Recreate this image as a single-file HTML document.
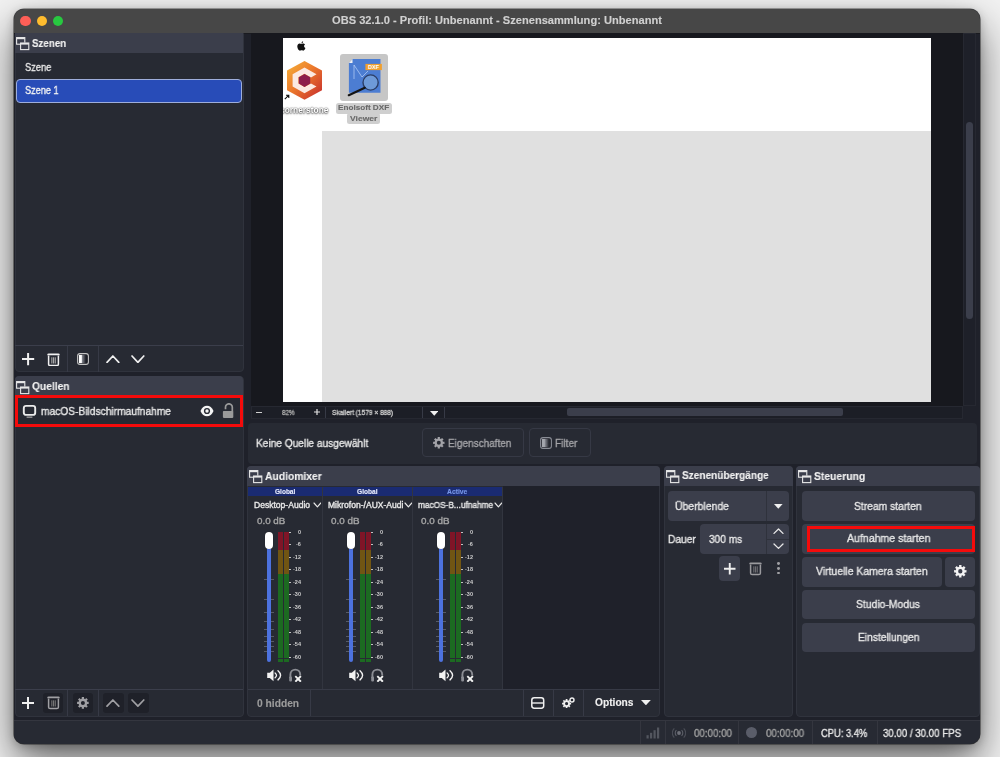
<!DOCTYPE html>
<html><head><meta charset="utf-8">
<style>
*{box-sizing:border-box;margin:0;padding:0}
html,body{width:1000px;height:757px;overflow:hidden;background:#f2f2f2;font-family:"Liberation Sans",sans-serif;position:relative}
div,span,svg{position:absolute;display:block}
.tx{white-space:nowrap;line-height:1;will-change:transform}
</style></head><body>
<div style="left:14px;top:9px;width:966px;height:735px;border-radius:10px;background:#1f212a;box-shadow:0 18px 40px rgba(0,0,0,0.58),0 2px 10px rgba(0,0,0,0.22),0 0 0 0.6px rgba(0,0,0,0.6)"></div>
<div style="left:14px;top:9px;width:966px;height:24px;background:#474747;border-radius:10px 10px 0 0"></div>
<div style="left:14px;top:32.6px;width:966px;height:0.8px;background:#1a1b20"></div>
<div style="left:20.3px;top:16px;width:10.4px;height:10.4px;border-radius:50%;background:#fe5f57"></div>
<div style="left:36.8px;top:16px;width:10.4px;height:10.4px;border-radius:50%;background:#febc2e"></div>
<div style="left:53.0px;top:16px;width:10.4px;height:10.4px;border-radius:50%;background:#28c840"></div>
<span class="tx" style="left:331.80px;top:15.49px;font-size:11px;font-weight:bold;color:#d0d0d0;transform:scaleX(1.0089);transform-origin:0 0;-webkit-text-stroke:0.12px #d0d0d0;">OBS 32.1.0 - Profil: Unbenannt - Szenensammlung: Unbenannt</span>
<div style="left:14.5px;top:33px;width:229.5px;height:339.4px;background:#272a33;border-radius:0 0 4px 4px;border:1px solid #30333d"></div>
<div style="left:15px;top:33px;width:228px;height:20px;background:#3b3e4b"></div>
<svg style="left:15.5px;top:36.5px;" width="14" height="14" viewBox="0 0 14 14"><rect x="0.6" y="0.6" width="8.2" height="6.6" fill="none" stroke="#e8e8e8" stroke-width="1.1"/><rect x="0.6" y="0.6" width="8.2" height="1.6" fill="#e8e8e8"/><rect x="4.2" y="5.6" width="8.6" height="7" fill="#3b3e4b" /><rect x="4.6" y="6.0" width="8.2" height="6.6" fill="none" stroke="#e8e8e8" stroke-width="1.1"/><rect x="4.6" y="6.0" width="8.2" height="1.6" fill="#e8e8e8"/></svg>
<span class="tx" style="left:32.00px;top:37.59px;font-size:11px;font-weight:bold;color:#f2f2f2;transform:scaleX(0.8883);transform-origin:0 0;-webkit-text-stroke:0.12px #f2f2f2;">Szenen</span>
<span class="tx" style="left:24.80px;top:62.09px;font-size:11px;font-weight:normal;color:#e8e8e8;transform:scaleX(0.8466);transform-origin:0 0;-webkit-text-stroke:0.35px #e8e8e8;">Szene</span>
<div style="left:16px;top:79px;width:226px;height:24px;background:#284cb8;border:1px solid #9eaedc;border-radius:4px"></div>
<span class="tx" style="left:24.80px;top:85.49px;font-size:11px;font-weight:normal;color:#f4f4f4;transform:scaleX(0.8323);transform-origin:0 0;-webkit-text-stroke:0.35px #f4f4f4;">Szene 1</span>
<div style="left:15px;top:345px;width:228px;height:1px;background:#3b3e4b"></div>
<div style="left:67px;top:346px;width:1px;height:26px;background:#373a46"></div>
<div style="left:98px;top:346px;width:1px;height:26px;background:#373a46"></div>
<div style="left:14.5px;top:376px;width:229.5px;height:340.6px;background:#272a33;border-radius:4px;border:1px solid #30333d"></div>
<div style="left:15px;top:376px;width:228px;height:19px;background:#3b3e4b;border-radius:4px 4px 0 0"></div>
<svg style="left:15.5px;top:380.8px;" width="14" height="14" viewBox="0 0 14 14"><rect x="0.6" y="0.6" width="8.2" height="6.6" fill="none" stroke="#e8e8e8" stroke-width="1.1"/><rect x="0.6" y="0.6" width="8.2" height="1.6" fill="#e8e8e8"/><rect x="4.2" y="5.6" width="8.6" height="7" fill="#3b3e4b" /><rect x="4.6" y="6.0" width="8.2" height="6.6" fill="none" stroke="#e8e8e8" stroke-width="1.1"/><rect x="4.6" y="6.0" width="8.2" height="1.6" fill="#e8e8e8"/></svg>
<span class="tx" style="left:32.40px;top:380.89px;font-size:11px;font-weight:bold;color:#f2f2f2;transform:scaleX(0.9314);transform-origin:0 0;-webkit-text-stroke:0.12px #f2f2f2;">Quellen</span>
<div style="left:15px;top:395px;width:228px;height:32px;border:3px solid #f40b0b"></div>
<span class="tx" style="left:41.40px;top:405.69px;font-size:11px;font-weight:normal;color:#e8e8e8;transform:scaleX(0.9287);transform-origin:0 0;-webkit-text-stroke:0.35px #e8e8e8;">macOS-Bildschirmaufnahme</span>
<div style="left:15px;top:689px;width:228px;height:1px;background:#3b3e4b"></div>
<div style="left:67px;top:690px;width:1px;height:26px;background:#373a46"></div>
<div style="left:98px;top:690px;width:1px;height:26px;background:#373a46"></div>
<div style="left:42.5px;top:693px;width:20.5px;height:20px;background:#1f2129;border-radius:3px"></div>
<div style="left:72.5px;top:693px;width:20.5px;height:20px;background:#1f2129;border-radius:3px"></div>
<div style="left:103px;top:693px;width:20.5px;height:20px;background:#1f2129;border-radius:3px"></div>
<div style="left:128px;top:693px;width:20.5px;height:20px;background:#1f2129;border-radius:3px"></div>
<div style="left:251px;top:33px;width:712px;height:373px;background:#17181e"></div>
<div style="left:283px;top:38px;width:648px;height:364px;background:#ffffff"></div>
<div style="left:322px;top:131px;width:609px;height:271px;background:#e0e0e0"></div>
<div style="left:963px;top:33px;width:12.5px;height:373px;background:#1e2029;border:1px solid #262831"></div>
<div style="left:966px;top:121.6px;width:7px;height:197.2px;background:#3b3e4b;border-radius:3.5px"></div>
<div style="left:251px;top:406px;width:712px;height:13px;background:#1c1e26;border:1px solid #262831"></div>
<div style="left:325px;top:407px;width:1px;height:11px;background:#373a46"></div>
<div style="left:422px;top:407px;width:1px;height:11px;background:#373a46"></div>
<div style="left:444px;top:407px;width:1px;height:11px;background:#373a46"></div>
<div style="left:567px;top:408px;width:276px;height:8px;background:#3b3e4b;border-radius:2px"></div>
<span class="tx" style="left:281.50px;top:409.07px;font-size:7px;font-weight:normal;color:#a8a8a8;transform:scaleX(0.8929);transform-origin:0 0;-webkit-text-stroke:0.35px #a8a8a8;">82%</span>
<span class="tx" style="left:331.90px;top:409.07px;font-size:7px;font-weight:normal;color:#c8c8c8;transform:scaleX(0.9375);transform-origin:0 0;-webkit-text-stroke:0.35px #c8c8c8;">Skaliert (1579 × 888)</span>
<div style="left:248px;top:423px;width:729px;height:41px;background:#272a33;border-radius:4px"></div>
<span class="tx" style="left:255.50px;top:437.89px;font-size:11px;font-weight:normal;color:#e8e8e8;transform:scaleX(0.9218);transform-origin:0 0;-webkit-text-stroke:0.35px #e8e8e8;">Keine Quelle ausgewählt</span>
<div style="left:422px;top:428px;width:102px;height:29px;border:1px solid #363945;border-radius:4px"></div>
<span class="tx" style="left:447.60px;top:438.09px;font-size:11px;font-weight:normal;color:#a4a4a8;transform:scaleX(0.9091);transform-origin:0 0;-webkit-text-stroke:0.35px #a4a4a8;">Eigenschaften</span>
<div style="left:529px;top:428px;width:62px;height:29px;border:1px solid #363945;border-radius:4px"></div>
<span class="tx" style="left:554.60px;top:438.09px;font-size:11px;font-weight:normal;color:#a4a4a8;transform:scaleX(0.9173);transform-origin:0 0;-webkit-text-stroke:0.35px #a4a4a8;">Filter</span>
<div style="left:247px;top:466px;width:413px;height:250.6px;background:#272a33;border-radius:4px;border:1px solid #30333d"></div>
<div style="left:247px;top:466px;width:413px;height:20.4px;background:#3b3e4b;border-radius:4px 4px 0 0"></div>
<svg style="left:248.5px;top:469.5px;" width="14" height="14" viewBox="0 0 14 14"><rect x="0.6" y="0.6" width="8.2" height="6.6" fill="none" stroke="#e8e8e8" stroke-width="1.1"/><rect x="0.6" y="0.6" width="8.2" height="1.6" fill="#e8e8e8"/><rect x="4.2" y="5.6" width="8.6" height="7" fill="#3b3e4b" /><rect x="4.6" y="6.0" width="8.2" height="6.6" fill="none" stroke="#e8e8e8" stroke-width="1.1"/><rect x="4.6" y="6.0" width="8.2" height="1.6" fill="#e8e8e8"/></svg>
<span class="tx" style="left:265.00px;top:470.69px;font-size:11px;font-weight:bold;color:#f2f2f2;transform:scaleX(0.9372);transform-origin:0 0;-webkit-text-stroke:0.12px #f2f2f2;">Audiomixer</span>
<div style="left:503px;top:486px;width:156px;height:203px;background:#1f212a"></div>
<div style="left:248px;top:689px;width:411px;height:1px;background:#373a46"></div>
<div style="left:310px;top:690px;width:1px;height:26px;background:#373a46"></div>
<div style="left:523px;top:690px;width:1px;height:26px;background:#373a46"></div>
<div style="left:553px;top:690px;width:1px;height:26px;background:#373a46"></div>
<div style="left:583px;top:690px;width:1px;height:26px;background:#373a46"></div>
<span class="tx" style="left:256.70px;top:698.83px;font-size:10px;font-weight:bold;color:#9c9c9c;transform:scaleX(1.0243);transform-origin:0 0;-webkit-text-stroke:0.12px #9c9c9c;">0 hidden</span>
<span class="tx" style="left:595.00px;top:698.03px;font-size:10px;font-weight:bold;color:#f0f0f0;transform:scaleX(1.0199);transform-origin:0 0;-webkit-text-stroke:0.12px #f0f0f0;">Options</span>
<div style="left:664px;top:466px;width:129px;height:250.6px;background:#272a33;border-radius:4px;border:1px solid #30333d"></div>
<div style="left:664px;top:466px;width:129px;height:20.4px;background:#3b3e4b;border-radius:4px 4px 0 0"></div>
<svg style="left:665.5px;top:469.5px;" width="14" height="14" viewBox="0 0 14 14"><rect x="0.6" y="0.6" width="8.2" height="6.6" fill="none" stroke="#e8e8e8" stroke-width="1.1"/><rect x="0.6" y="0.6" width="8.2" height="1.6" fill="#e8e8e8"/><rect x="4.2" y="5.6" width="8.6" height="7" fill="#3b3e4b" /><rect x="4.6" y="6.0" width="8.2" height="6.6" fill="none" stroke="#e8e8e8" stroke-width="1.1"/><rect x="4.6" y="6.0" width="8.2" height="1.6" fill="#e8e8e8"/></svg>
<span class="tx" style="left:681.60px;top:470.49px;font-size:11px;font-weight:bold;color:#f2f2f2;transform:scaleX(0.9159);transform-origin:0 0;-webkit-text-stroke:0.12px #f2f2f2;">Szenenübergänge</span>
<div style="left:668px;top:491px;width:121px;height:30px;background:#3b3e4b;border-radius:4px"></div>
<div style="left:766px;top:491px;width:1px;height:30px;background:#2f323c"></div>
<span class="tx" style="left:675.30px;top:501.49px;font-size:11px;font-weight:normal;color:#e8e8e8;transform:scaleX(0.9478);transform-origin:0 0;-webkit-text-stroke:0.35px #e8e8e8;">Überblende</span>
<span class="tx" style="left:667.90px;top:533.89px;font-size:11px;font-weight:normal;color:#e8e8e8;transform:scaleX(0.9274);transform-origin:0 0;-webkit-text-stroke:0.35px #e8e8e8;">Dauer</span>
<div style="left:700px;top:524px;width:89px;height:30px;background:#3b3e4b;border-radius:4px"></div>
<div style="left:766px;top:524px;width:1px;height:30px;background:#2f323c"></div>
<div style="left:767px;top:539px;width:22px;height:1px;background:#2f323c"></div>
<span class="tx" style="left:708.60px;top:533.89px;font-size:11px;font-weight:normal;color:#e8e8e8;transform:scaleX(0.9202);transform-origin:0 0;-webkit-text-stroke:0.35px #e8e8e8;">300 ms</span>
<div style="left:718.5px;top:555.5px;width:21.5px;height:25.5px;background:#3b3e4b;border-radius:4px"></div>
<div style="left:796px;top:466px;width:184px;height:250.6px;background:#272a33;border-radius:4px;border:1px solid #30333d"></div>
<div style="left:796px;top:466px;width:184px;height:20.4px;background:#3b3e4b;border-radius:4px 4px 0 0"></div>
<svg style="left:797.5px;top:469.5px;" width="14" height="14" viewBox="0 0 14 14"><rect x="0.6" y="0.6" width="8.2" height="6.6" fill="none" stroke="#e8e8e8" stroke-width="1.1"/><rect x="0.6" y="0.6" width="8.2" height="1.6" fill="#e8e8e8"/><rect x="4.2" y="5.6" width="8.6" height="7" fill="#3b3e4b" /><rect x="4.6" y="6.0" width="8.2" height="6.6" fill="none" stroke="#e8e8e8" stroke-width="1.1"/><rect x="4.6" y="6.0" width="8.2" height="1.6" fill="#e8e8e8"/></svg>
<span class="tx" style="left:814.40px;top:470.69px;font-size:11px;font-weight:bold;color:#f2f2f2;transform:scaleX(0.9413);transform-origin:0 0;-webkit-text-stroke:0.12px #f2f2f2;">Steuerung</span>
<div style="left:802px;top:491px;width:172.5px;height:29.5px;background:#3b3e4b;border-radius:4px"></div>
<span class="tx" style="left:854.40px;top:501.29px;font-size:11px;font-weight:normal;color:#e8e8e8;transform:scaleX(0.9368);transform-origin:0 0;-webkit-text-stroke:0.35px #e8e8e8;">Stream starten</span>
<div style="left:802px;top:524px;width:172.5px;height:29.5px;background:#3b3e4b;border-radius:4px"></div>
<div style="left:807px;top:526px;width:168px;height:26px;border:3px solid #f40b0b"></div>
<span class="tx" style="left:846.60px;top:533.49px;font-size:11px;font-weight:normal;color:#e8e8e8;transform:scaleX(0.9603);transform-origin:0 0;-webkit-text-stroke:0.35px #e8e8e8;">Aufnahme starten</span>
<div style="left:802px;top:557px;width:139.5px;height:29.5px;background:#3b3e4b;border-radius:4px"></div>
<span class="tx" style="left:816.00px;top:566.49px;font-size:11px;font-weight:normal;color:#e8e8e8;transform:scaleX(0.9473);transform-origin:0 0;-webkit-text-stroke:0.35px #e8e8e8;">Virtuelle Kamera starten</span>
<div style="left:945px;top:557px;width:29.5px;height:29.5px;background:#3b3e4b;border-radius:4px"></div>
<div style="left:802px;top:590px;width:172.5px;height:29px;background:#3b3e4b;border-radius:4px"></div>
<span class="tx" style="left:856.10px;top:599.49px;font-size:11px;font-weight:normal;color:#e8e8e8;transform:scaleX(0.9430);transform-origin:0 0;-webkit-text-stroke:0.35px #e8e8e8;">Studio-Modus</span>
<div style="left:802px;top:622.5px;width:172.5px;height:29px;background:#3b3e4b;border-radius:4px"></div>
<span class="tx" style="left:857.60px;top:631.89px;font-size:11px;font-weight:normal;color:#e8e8e8;transform:scaleX(0.9295);transform-origin:0 0;-webkit-text-stroke:0.35px #e8e8e8;">Einstellungen</span>
<div style="left:14px;top:719.5px;width:966px;height:24.5px;background:#272a33;border-top:1px solid #34363f;border-radius:0 0 10px 10px"></div>
<div style="left:640px;top:720px;width:1px;height:24px;background:#34363f"></div>
<div style="left:665px;top:720px;width:1px;height:24px;background:#34363f"></div>
<div style="left:738px;top:720px;width:1px;height:24px;background:#34363f"></div>
<div style="left:811.5px;top:720px;width:1px;height:24px;background:#34363f"></div>
<div style="left:876.5px;top:720px;width:1px;height:24px;background:#34363f"></div>
<span class="tx" style="left:693.60px;top:728.11px;font-size:10.5px;font-weight:normal;color:#a0a0a0;transform:scaleX(0.9292);transform-origin:0 0;-webkit-text-stroke:0.35px #a0a0a0;">00:00:00</span>
<div style="left:745.6px;top:726.6px;width:11.5px;height:11.5px;background:#5a5d69;border-radius:50%"></div>
<span class="tx" style="left:766.40px;top:728.11px;font-size:10.5px;font-weight:normal;color:#a0a0a0;transform:scaleX(0.9340);transform-origin:0 0;-webkit-text-stroke:0.35px #a0a0a0;">00:00:00</span>
<span class="tx" style="left:820.70px;top:728.11px;font-size:10.5px;font-weight:normal;color:#e8e8e8;transform:scaleX(0.8917);transform-origin:0 0;-webkit-text-stroke:0.35px #e8e8e8;">CPU: 3.4%</span>
<span class="tx" style="left:882.50px;top:728.11px;font-size:10.5px;font-weight:normal;color:#e8e8e8;transform:scaleX(0.9217);transform-origin:0 0;-webkit-text-stroke:0.35px #e8e8e8;">30.00 / 30.00 FPS</span>
<svg style="left:20.799999999999997px;top:352.0px;" width="14.2" height="14.2" viewBox="0 0 14.2 14.2"><path d="M7.1,1 V13.2 M1,7.1 H13.2" stroke="#f0f0f0" stroke-width="2" fill="none"/></svg>
<svg style="left:46.6px;top:352.7px;" width="13" height="13.5" viewBox="0 0 13 13.5"><path d="M0.3,1.6 Q0.3,0.6 1.6,0.6 H11.4 Q12.7,0.6 12.7,1.6 V2.2 H0.3 Z" fill="#f0f0f0"/><path d="M1.6,2.6 V11.2 Q1.6,12.6 3.2,12.6 H9.8 Q11.4,12.6 11.4,11.2 V2.6" stroke="#f0f0f0" stroke-width="1.5" fill="none"/><rect x="4.3" y="4.3" width="1.1" height="6.2" fill="#aaa"/><rect x="6" y="4.3" width="1.1" height="6.2" fill="#aaa"/><rect x="7.7" y="4.3" width="1.1" height="6.2" fill="#aaa"/></svg>
<svg style="left:77.1px;top:353px;" width="12" height="12" viewBox="0 0 12 12"><defs><linearGradient id="fg77_353" x1="0" x2="1"><stop offset="0" stop-color="#ffffff"/><stop offset="0.3" stop-color="#ffffff"/><stop offset="0.42" stop-color="#80828a"/><stop offset="0.85" stop-color="#1c1e26"/></linearGradient></defs><rect x="0.6" y="0.6" width="10.8" height="10.8" rx="2.4" fill="#20222a" stroke="#c4c4c4" stroke-width="1.1"/><rect x="1.9" y="1.9" width="8.2" height="8.2" fill="url(#fg77_353)"/></svg>
<svg style="left:106.3px;top:355.1px;" width="13.8" height="8.3" viewBox="0 0 13.8 8.3"><path d="M1,7.3 L6.9,1 L12.8,7.3" stroke="#f0f0f0" stroke-width="1.7" fill="none" stroke-linecap="round" stroke-linejoin="round"/></svg>
<svg style="left:131.0px;top:355.1px;" width="13.8" height="8.3" viewBox="0 0 13.8 8.3"><path d="M1,1 L6.9,7.3 L12.8,1" stroke="#f0f0f0" stroke-width="1.7" fill="none" stroke-linecap="round" stroke-linejoin="round"/></svg>
<svg style="left:21.0px;top:695.8px;" width="14" height="14" viewBox="0 0 14 14"><path d="M7.0,1 V13 M1,7.0 H13" stroke="#f0f0f0" stroke-width="2" fill="none"/></svg>
<svg style="left:46.6px;top:696.2px;" width="13" height="13.5" viewBox="0 0 13 13.5"><path d="M0.3,1.6 Q0.3,0.6 1.6,0.6 H11.4 Q12.7,0.6 12.7,1.6 V2.2 H0.3 Z" fill="#a0a0a4"/><path d="M1.6,2.6 V11.2 Q1.6,12.6 3.2,12.6 H9.8 Q11.4,12.6 11.4,11.2 V2.6" stroke="#a0a0a4" stroke-width="1.5" fill="none"/><rect x="4.3" y="4.3" width="1.1" height="6.2" fill="#777"/><rect x="6" y="4.3" width="1.1" height="6.2" fill="#777"/><rect x="7.7" y="4.3" width="1.1" height="6.2" fill="#777"/></svg>
<svg style="left:75.89999999999999px;top:696.0px;" width="13.8" height="13.8" viewBox="0 0 13.8 13.8"><path d="M10.94,5.23 L11.14,5.84 L12.69,5.75 L12.69,8.05 L11.14,7.96 L10.93,8.57 L10.64,9.14 L11.81,10.18 L10.18,11.81 L9.14,10.64 L8.57,10.94 L7.96,11.14 L8.05,12.69 L5.75,12.69 L5.84,11.14 L5.23,10.93 L4.66,10.64 L3.62,11.81 L1.99,10.18 L3.16,9.14 L2.86,8.57 L2.66,7.96 L1.11,8.05 L1.11,5.75 L2.66,5.84 L2.87,5.23 L3.16,4.66 L1.99,3.62 L3.62,1.99 L4.66,3.16 L5.23,2.86 L5.84,2.66 L5.75,1.11 L8.05,1.11 L7.96,2.66 L8.57,2.87 L9.14,3.16 L10.18,1.99 L11.81,3.62 L10.64,4.66 Z M8.91,6.90 A2.0060000000000002,2.0060000000000002 0 1,0 4.89,6.90 A2.0060000000000002,2.0060000000000002 0 1,0 8.91,6.90 Z" fill="#a0a0a4" fill-rule="evenodd"/></svg>
<svg style="left:106.3px;top:698.6px;" width="13.8" height="8.2" viewBox="0 0 13.8 8.2"><path d="M1,7.2 L6.9,1 L12.8,7.2" stroke="#a0a0a4" stroke-width="1.7" fill="none" stroke-linecap="round" stroke-linejoin="round"/></svg>
<svg style="left:131.0px;top:698.6px;" width="13.8" height="8.2" viewBox="0 0 13.8 8.2"><path d="M1,1 L6.9,7.2 L12.8,1" stroke="#a0a0a4" stroke-width="1.7" fill="none" stroke-linecap="round" stroke-linejoin="round"/></svg>
<svg style="left:22px;top:404px;" width="16" height="15" viewBox="0 0 16 15"><rect x="1.8" y="1.9" width="11.4" height="9" rx="2.2" fill="none" stroke="#ececec" stroke-width="1.9"/><rect x="4.6" y="12.4" width="5.8" height="1.6" fill="#8a8a8e"/></svg>
<svg style="left:199.5px;top:405.2px;" width="14" height="12" viewBox="0 0 14 12"><path d="M0.5,6 C3,-1 11,-1 13.5,6 C11,13 3,13 0.5,6 Z" fill="#f4f4f4"/><circle cx="7" cy="6" r="3.1" fill="#272a33"/><circle cx="7" cy="6" r="1.7" fill="#f4f4f4"/></svg>
<svg style="left:222px;top:403px;" width="12" height="16" viewBox="0 0 12 16"><path d="M3.5,6.2 V4.2 A3.4,3.4 0 0 1 10.3,4.2 V8.5" stroke="#9a9a9a" stroke-width="1.7" fill="none"/><rect x="0.9" y="8" width="10.4" height="6.9" rx="0.8" fill="#9a9a9a"/></svg>
<svg style="left:432.0px;top:436.0px;" width="13.6" height="13.6" viewBox="0 0 13.6 13.6"><path d="M10.77,5.16 L10.96,5.76 L12.49,5.67 L12.49,7.93 L10.96,7.84 L10.76,8.45 L10.48,9.01 L11.62,10.02 L10.02,11.62 L9.01,10.48 L8.44,10.77 L7.84,10.96 L7.93,12.49 L5.67,12.49 L5.76,10.96 L5.15,10.76 L4.59,10.48 L3.58,11.62 L1.98,10.02 L3.12,9.01 L2.83,8.44 L2.64,7.84 L1.11,7.93 L1.11,5.67 L2.64,5.76 L2.84,5.15 L3.12,4.59 L1.98,3.58 L3.58,1.98 L4.59,3.12 L5.16,2.83 L5.76,2.64 L5.67,1.11 L7.93,1.11 L7.84,2.64 L8.45,2.84 L9.01,3.12 L10.02,1.98 L11.62,3.58 L10.48,4.59 Z M8.77,6.80 A1.972,1.972 0 1,0 4.83,6.80 A1.972,1.972 0 1,0 8.77,6.80 Z" fill="#a3a3a8" fill-rule="evenodd"/></svg>
<svg style="left:540.2px;top:437px;" width="12" height="12" viewBox="0 0 12 12"><defs><linearGradient id="fg540_437" x1="0" x2="1"><stop offset="0" stop-color="#a4a6ad"/><stop offset="0.3" stop-color="#a4a6ad"/><stop offset="0.42" stop-color="#80828a"/><stop offset="0.85" stop-color="#262830"/></linearGradient></defs><rect x="0.6" y="0.6" width="10.8" height="10.8" rx="2.4" fill="#20222a" stroke="#8a8d96" stroke-width="1.1"/><rect x="1.9" y="1.9" width="8.2" height="8.2" fill="url(#fg540_437)"/></svg>
<div style="left:256px;top:412px;width:6.2px;height:1.2px;background:#cfcfcf"></div>
<svg style="left:312.8px;top:408.2px;" width="8" height="8" viewBox="0 0 8 8"><path d="M4.0,1 V7 M1,4.0 H7" stroke="#e0e0e0" stroke-width="1.2" fill="none"/></svg>
<svg style="left:429.5px;top:410.6px;" width="8.5" height="5" viewBox="0 0 8.5 5"><path d="M0,0 H8.5 L4.25,4.8 Z" fill="#f0f0f0"/></svg>
<svg style="left:296.5px;top:40.5px;" width="9" height="10" viewBox="0 0 9 10"><path d="M6.1,0.2 C6.2,1.2 5.5,2.3 4.5,2.4 C4.4,1.4 5.1,0.4 6.1,0.2 Z M4.3,2.9 C4.9,2.9 5.4,2.5 6.1,2.5 C6.6,2.5 7.5,2.8 8,3.6 C6.6,4.4 6.8,6.5 8.4,7.1 C8,8.3 7.2,9.7 6.3,9.7 C5.6,9.7 5.4,9.3 4.6,9.3 C3.8,9.3 3.5,9.7 2.9,9.7 C1.9,9.7 0.3,7.6 0.3,5.5 C0.3,3.5 1.5,2.5 2.6,2.5 C3.3,2.5 3.8,2.9 4.3,2.9 Z" fill="#111"/></svg>
<svg style="left:286px;top:60px;" width="37" height="41" viewBox="0 0 37 41"><defs><linearGradient id="hx" x1="0" y1="0" x2="1" y2="1"><stop offset="0" stop-color="#f6b43a"/><stop offset="0.45" stop-color="#ec7a2c"/><stop offset="1" stop-color="#c4282e"/></linearGradient></defs><path d="M18.5,1 L36,10.5 L36,30.2 L18.5,39.7 L1,30.2 L1,10.5 Z" fill="url(#hx)" stroke-linejoin="round"/><path d="M18.5,7.5 L30.5,14.3 L25,17.4 L18.5,13.7 L12.4,17.2 L12.4,23.6 L18.5,27.1 L25,23.4 L30.5,26.5 L18.5,33.3 L6.6,26.5 L6.6,14.3 Z" fill="#fbe9e2"/><path d="M18.5,13.9 L24.2,17.2 L24.2,23.6 L18.5,26.9 L12.8,23.6 L12.8,17.2 Z" fill="#8c1d4c"/></svg>
<svg style="left:284px;top:93.5px;" width="6" height="6" viewBox="0 0 6 6"><path d="M0.8,5.2 L4.6,1.4 M2,1.2 H4.8 V4" stroke="#111" stroke-width="1.1" fill="none"/></svg>
<div style="left:283px;top:100px;width:60px;height:20px;overflow:hidden"><span class="tx" style="left:-2.8px;top:5.6px;font-size:8.4px;font-weight:bold;color:#ffffff;text-shadow:0 0 1.5px rgba(0,0,0,0.9),0 0.5px 2px rgba(0,0,0,0.6)">cornerstone</span></div>
<div style="left:339.6px;top:54px;width:48.5px;height:46.5px;background:#c6c6c6;border-radius:3px"></div>
<svg style="left:346px;top:57px;" width="38" height="40" viewBox="0 0 38 40"><path d="M6.5,2 H34.5 V35.8 H2.9 V6 Z" fill="#4c7dd2"/><path d="M6.5,2 L2.9,6 H6.5 Z" fill="#f2f2f2"/><path d="M8,8 L16,20 L22,14 M8,8 L8,22" stroke="#cfe0ff" stroke-width="0.6" fill="none"/><rect x="19.4" y="6.9" width="16.5" height="6.2" fill="#f0a030"/><text x="27.6" y="12.3" font-size="5.6" font-weight="bold" fill="#fff" text-anchor="middle" font-family="Liberation Sans">DXF</text><circle cx="24.6" cy="25.5" r="7.6" fill="#6e9ad8" stroke="#2c3e66" stroke-width="1.4"/><path d="M18.8,30.8 L2.8,38.2" stroke="#151515" stroke-width="2.2" stroke-linecap="round"/></svg>
<div style="left:335.5px;top:102.6px;width:56.2px;height:11px;background:#cfcfcf;border-radius:2.5px"></div>
<div style="left:347.2px;top:112.8px;width:33px;height:11.4px;background:#cfcfcf;border-radius:2.5px"></div>
<span class="tx" style="left:337.90px;top:104.45px;font-size:7.5px;font-weight:bold;color:#686868;transform:scaleX(1.0870);transform-origin:0 0;-webkit-text-stroke:0.12px #686868;">Enolsoft DXF</span>
<span class="tx" style="left:350.00px;top:115.25px;font-size:7.5px;font-weight:bold;color:#686868;transform:scaleX(1.1357);transform-origin:0 0;-webkit-text-stroke:0.12px #686868;">Viewer</span>
<div style="left:248px;top:486.8px;width:73.5px;height:9.4px;background:#1a2b72"></div>
<div style="left:322px;top:486.8px;width:90px;height:9.4px;background:#1a2b72"></div>
<div style="left:412.5px;top:486.8px;width:89.5px;height:9.4px;background:#1a2b72"></div>
<div style="left:321.5px;top:487px;width:1px;height:202px;background:#32353f"></div>
<div style="left:412px;top:487px;width:1px;height:202px;background:#32353f"></div>
<div style="left:502px;top:487px;width:1px;height:202px;background:#32353f"></div>
<span class="tx" style="left:274.90px;top:489.10px;font-size:6.5px;font-weight:bold;color:#e8ecff;transform:scaleX(1.0042);transform-origin:0 0;-webkit-text-stroke:0.12px #e8ecff;">Global</span>
<span class="tx" style="left:356.50px;top:489.10px;font-size:6.5px;font-weight:bold;color:#e8ecff;transform:scaleX(1.0141);transform-origin:0 0;-webkit-text-stroke:0.12px #e8ecff;">Global</span>
<span class="tx" style="left:447.00px;top:489.10px;font-size:6.5px;font-weight:bold;color:#7796e8;transform:scaleX(1.0410);transform-origin:0 0;-webkit-text-stroke:0.12px #7796e8;">Active</span>
<span class="tx" style="left:253.70px;top:500.60px;font-size:8.5px;font-weight:normal;color:#e8e8e8;transform:scaleX(1.0061);transform-origin:0 0;-webkit-text-stroke:0.35px #e8e8e8;">Desktop-Audio</span>
<span class="tx" style="left:327.60px;top:500.60px;font-size:8.5px;font-weight:normal;color:#e8e8e8;transform:scaleX(1.0040);transform-origin:0 0;-webkit-text-stroke:0.35px #e8e8e8;">Mikrofon-/AUX-Audi</span>
<span class="tx" style="left:417.90px;top:500.60px;font-size:8.5px;font-weight:normal;color:#e8e8e8;transform:scaleX(0.9752);transform-origin:0 0;-webkit-text-stroke:0.35px #e8e8e8;">macOS-B...ufnahme</span>
<svg style="left:312.6px;top:502.2px;" width="8.8" height="5.8" viewBox="0 0 8.8 5.8"><path d="M1,1 L4.4,4.8 L7.8,1" stroke="#e8e8e8" stroke-width="1.15" fill="none" stroke-linecap="round" stroke-linejoin="round"/></svg>
<svg style="left:403.6px;top:502.2px;" width="8.8" height="5.8" viewBox="0 0 8.8 5.8"><path d="M1,1 L4.4,4.8 L7.8,1" stroke="#e8e8e8" stroke-width="1.15" fill="none" stroke-linecap="round" stroke-linejoin="round"/></svg>
<svg style="left:493.6px;top:502.2px;" width="8.8" height="5.8" viewBox="0 0 8.8 5.8"><path d="M1,1 L4.4,4.8 L7.8,1" stroke="#e8e8e8" stroke-width="1.15" fill="none" stroke-linecap="round" stroke-linejoin="round"/></svg>
<span class="tx" style="left:256.90px;top:515.96px;font-size:9.5px;font-weight:normal;color:#a6a6a6;transform:scaleX(1.0308);transform-origin:0 0;-webkit-text-stroke:0.35px #a6a6a6;">0.0 dB</span>
<span class="tx" style="left:330.50px;top:515.96px;font-size:9.5px;font-weight:normal;color:#a6a6a6;transform:scaleX(1.0381);transform-origin:0 0;-webkit-text-stroke:0.35px #a6a6a6;">0.0 dB</span>
<span class="tx" style="left:420.80px;top:515.96px;font-size:9.5px;font-weight:normal;color:#a6a6a6;transform:scaleX(1.0381);transform-origin:0 0;-webkit-text-stroke:0.35px #a6a6a6;">0.0 dB</span>
<div style="left:264px;top:578.9px;width:10px;height:1px;background:#585b67"></div>
<div style="left:264px;top:598.6px;width:10px;height:1px;background:#585b67"></div>
<div style="left:264px;top:611.7px;width:10px;height:1px;background:#585b67"></div>
<div style="left:264px;top:621.4px;width:10px;height:1px;background:#585b67"></div>
<div style="left:264px;top:628.6px;width:10px;height:1px;background:#585b67"></div>
<div style="left:264px;top:635.5px;width:10px;height:1px;background:#585b67"></div>
<div style="left:264px;top:641.3px;width:10px;height:1px;background:#585b67"></div>
<div style="left:264px;top:646.0px;width:10px;height:1px;background:#585b67"></div>
<div style="left:264px;top:650.9px;width:10px;height:1px;background:#585b67"></div>
<div style="left:267.3px;top:540px;width:3.7px;height:122px;background:#4d72df;border-radius:2px"></div>
<div style="left:265px;top:532px;width:8.3px;height:17px;background:#ffffff;border-radius:4px;box-shadow:0 0 1px rgba(0,0,0,0.6)"></div>
<div style="left:278px;top:532px;width:5px;height:18px;background:#7f1527"></div>
<div style="left:278px;top:550px;width:5px;height:24px;background:#705513"></div>
<div style="left:278px;top:574px;width:5px;height:83.8px;background:#1c6a21"></div>
<div style="left:278px;top:659.3px;width:5px;height:2.5px;background:#1c6a21"></div>
<div style="left:284px;top:532px;width:5px;height:18px;background:#7f1527"></div>
<div style="left:284px;top:550px;width:5px;height:24px;background:#705513"></div>
<div style="left:284px;top:574px;width:5px;height:83.8px;background:#1c6a21"></div>
<div style="left:284px;top:659.3px;width:5px;height:2.5px;background:#1c6a21"></div>
<div style="left:289px;top:531.6px;width:2px;height:1px;background:#c4c4c4"></div>
<span class="tx" style="left:298.24px;top:530.00px;font-size:5.5px;font-weight:bold;color:#cfcfcf">0</span>
<div style="left:289px;top:544.09px;width:2px;height:1px;background:#c4c4c4"></div>
<span class="tx" style="left:296.41px;top:542.49px;font-size:5.5px;font-weight:bold;color:#cfcfcf">-6</span>
<div style="left:289px;top:556.58px;width:2px;height:1px;background:#c4c4c4"></div>
<span class="tx" style="left:293.35px;top:554.98px;font-size:5.5px;font-weight:bold;color:#cfcfcf">-12</span>
<div style="left:289px;top:569.07px;width:2px;height:1px;background:#c4c4c4"></div>
<span class="tx" style="left:293.35px;top:567.47px;font-size:5.5px;font-weight:bold;color:#cfcfcf">-18</span>
<div style="left:289px;top:581.5600000000001px;width:2px;height:1px;background:#c4c4c4"></div>
<span class="tx" style="left:293.35px;top:579.96px;font-size:5.5px;font-weight:bold;color:#cfcfcf">-24</span>
<div style="left:289px;top:594.0500000000001px;width:2px;height:1px;background:#c4c4c4"></div>
<span class="tx" style="left:293.35px;top:592.45px;font-size:5.5px;font-weight:bold;color:#cfcfcf">-30</span>
<div style="left:289px;top:606.5400000000001px;width:2px;height:1px;background:#c4c4c4"></div>
<span class="tx" style="left:293.35px;top:604.94px;font-size:5.5px;font-weight:bold;color:#cfcfcf">-36</span>
<div style="left:289px;top:619.0300000000001px;width:2px;height:1px;background:#c4c4c4"></div>
<span class="tx" style="left:293.35px;top:617.43px;font-size:5.5px;font-weight:bold;color:#cfcfcf">-42</span>
<div style="left:289px;top:631.52px;width:2px;height:1px;background:#c4c4c4"></div>
<span class="tx" style="left:293.35px;top:629.92px;font-size:5.5px;font-weight:bold;color:#cfcfcf">-48</span>
<div style="left:289px;top:644.01px;width:2px;height:1px;background:#c4c4c4"></div>
<span class="tx" style="left:293.35px;top:642.41px;font-size:5.5px;font-weight:bold;color:#cfcfcf">-54</span>
<div style="left:289px;top:656.5px;width:2px;height:1px;background:#c4c4c4"></div>
<span class="tx" style="left:293.35px;top:654.90px;font-size:5.5px;font-weight:bold;color:#cfcfcf">-60</span>
<svg style="left:267px;top:668.5px;" width="15" height="13" viewBox="0 0 15 13"><path d="M0.2,3.8 H2.8 L6.5,0.5 V12.2 L2.8,8.9 H0.2 Z" fill="#f2f2f2"/><path d="M8.1,3.9 Q10.9,6.35 8.1,8.8" stroke="#f2f2f2" stroke-width="1.3" fill="none" stroke-linecap="round"/><path d="M11,1.8 Q16.2,6.35 11,10.9" stroke="#f2f2f2" stroke-width="1.4" fill="none" stroke-linecap="round"/></svg>
<svg style="left:289.3px;top:667.5px;" width="13" height="14" viewBox="0 0 13 14"><path d="M1.4,10 V6.5 A4.9,4.9 0 0 1 11.2,6.5 V7.6" stroke="#8b8d94" stroke-width="1.9" fill="none"/><rect x="0.2" y="8.6" width="2.8" height="5" rx="1" fill="#8b8d94"/><path d="M7,8.8 L11.2,13 M11.2,8.8 L7,13" stroke="#f4f4f4" stroke-width="1.9" stroke-linecap="square"/></svg>
<div style="left:346px;top:578.9px;width:10px;height:1px;background:#585b67"></div>
<div style="left:346px;top:598.6px;width:10px;height:1px;background:#585b67"></div>
<div style="left:346px;top:611.7px;width:10px;height:1px;background:#585b67"></div>
<div style="left:346px;top:621.4px;width:10px;height:1px;background:#585b67"></div>
<div style="left:346px;top:628.6px;width:10px;height:1px;background:#585b67"></div>
<div style="left:346px;top:635.5px;width:10px;height:1px;background:#585b67"></div>
<div style="left:346px;top:641.3px;width:10px;height:1px;background:#585b67"></div>
<div style="left:346px;top:646.0px;width:10px;height:1px;background:#585b67"></div>
<div style="left:346px;top:650.9px;width:10px;height:1px;background:#585b67"></div>
<div style="left:349.3px;top:540px;width:3.7px;height:122px;background:#4d72df;border-radius:2px"></div>
<div style="left:347px;top:532px;width:8.3px;height:17px;background:#ffffff;border-radius:4px;box-shadow:0 0 1px rgba(0,0,0,0.6)"></div>
<div style="left:360px;top:532px;width:5px;height:18px;background:#7f1527"></div>
<div style="left:360px;top:550px;width:5px;height:24px;background:#705513"></div>
<div style="left:360px;top:574px;width:5px;height:83.8px;background:#1c6a21"></div>
<div style="left:360px;top:659.3px;width:5px;height:2.5px;background:#1c6a21"></div>
<div style="left:366px;top:532px;width:5px;height:18px;background:#7f1527"></div>
<div style="left:366px;top:550px;width:5px;height:24px;background:#705513"></div>
<div style="left:366px;top:574px;width:5px;height:83.8px;background:#1c6a21"></div>
<div style="left:366px;top:659.3px;width:5px;height:2.5px;background:#1c6a21"></div>
<div style="left:371px;top:531.6px;width:2px;height:1px;background:#c4c4c4"></div>
<span class="tx" style="left:380.24px;top:530.00px;font-size:5.5px;font-weight:bold;color:#cfcfcf">0</span>
<div style="left:371px;top:544.09px;width:2px;height:1px;background:#c4c4c4"></div>
<span class="tx" style="left:378.41px;top:542.49px;font-size:5.5px;font-weight:bold;color:#cfcfcf">-6</span>
<div style="left:371px;top:556.58px;width:2px;height:1px;background:#c4c4c4"></div>
<span class="tx" style="left:375.35px;top:554.98px;font-size:5.5px;font-weight:bold;color:#cfcfcf">-12</span>
<div style="left:371px;top:569.07px;width:2px;height:1px;background:#c4c4c4"></div>
<span class="tx" style="left:375.35px;top:567.47px;font-size:5.5px;font-weight:bold;color:#cfcfcf">-18</span>
<div style="left:371px;top:581.5600000000001px;width:2px;height:1px;background:#c4c4c4"></div>
<span class="tx" style="left:375.35px;top:579.96px;font-size:5.5px;font-weight:bold;color:#cfcfcf">-24</span>
<div style="left:371px;top:594.0500000000001px;width:2px;height:1px;background:#c4c4c4"></div>
<span class="tx" style="left:375.35px;top:592.45px;font-size:5.5px;font-weight:bold;color:#cfcfcf">-30</span>
<div style="left:371px;top:606.5400000000001px;width:2px;height:1px;background:#c4c4c4"></div>
<span class="tx" style="left:375.35px;top:604.94px;font-size:5.5px;font-weight:bold;color:#cfcfcf">-36</span>
<div style="left:371px;top:619.0300000000001px;width:2px;height:1px;background:#c4c4c4"></div>
<span class="tx" style="left:375.35px;top:617.43px;font-size:5.5px;font-weight:bold;color:#cfcfcf">-42</span>
<div style="left:371px;top:631.52px;width:2px;height:1px;background:#c4c4c4"></div>
<span class="tx" style="left:375.35px;top:629.92px;font-size:5.5px;font-weight:bold;color:#cfcfcf">-48</span>
<div style="left:371px;top:644.01px;width:2px;height:1px;background:#c4c4c4"></div>
<span class="tx" style="left:375.35px;top:642.41px;font-size:5.5px;font-weight:bold;color:#cfcfcf">-54</span>
<div style="left:371px;top:656.5px;width:2px;height:1px;background:#c4c4c4"></div>
<span class="tx" style="left:375.35px;top:654.90px;font-size:5.5px;font-weight:bold;color:#cfcfcf">-60</span>
<svg style="left:349px;top:668.5px;" width="15" height="13" viewBox="0 0 15 13"><path d="M0.2,3.8 H2.8 L6.5,0.5 V12.2 L2.8,8.9 H0.2 Z" fill="#f2f2f2"/><path d="M8.1,3.9 Q10.9,6.35 8.1,8.8" stroke="#f2f2f2" stroke-width="1.3" fill="none" stroke-linecap="round"/><path d="M11,1.8 Q16.2,6.35 11,10.9" stroke="#f2f2f2" stroke-width="1.4" fill="none" stroke-linecap="round"/></svg>
<svg style="left:371.3px;top:667.5px;" width="13" height="14" viewBox="0 0 13 14"><path d="M1.4,10 V6.5 A4.9,4.9 0 0 1 11.2,6.5 V7.6" stroke="#8b8d94" stroke-width="1.9" fill="none"/><rect x="0.2" y="8.6" width="2.8" height="5" rx="1" fill="#8b8d94"/><path d="M7,8.8 L11.2,13 M11.2,8.8 L7,13" stroke="#f4f4f4" stroke-width="1.9" stroke-linecap="square"/></svg>
<div style="left:436px;top:578.9px;width:10px;height:1px;background:#585b67"></div>
<div style="left:436px;top:598.6px;width:10px;height:1px;background:#585b67"></div>
<div style="left:436px;top:611.7px;width:10px;height:1px;background:#585b67"></div>
<div style="left:436px;top:621.4px;width:10px;height:1px;background:#585b67"></div>
<div style="left:436px;top:628.6px;width:10px;height:1px;background:#585b67"></div>
<div style="left:436px;top:635.5px;width:10px;height:1px;background:#585b67"></div>
<div style="left:436px;top:641.3px;width:10px;height:1px;background:#585b67"></div>
<div style="left:436px;top:646.0px;width:10px;height:1px;background:#585b67"></div>
<div style="left:436px;top:650.9px;width:10px;height:1px;background:#585b67"></div>
<div style="left:439.3px;top:540px;width:3.7px;height:122px;background:#4d72df;border-radius:2px"></div>
<div style="left:437px;top:532px;width:8.3px;height:17px;background:#ffffff;border-radius:4px;box-shadow:0 0 1px rgba(0,0,0,0.6)"></div>
<div style="left:450px;top:532px;width:5px;height:18px;background:#7f1527"></div>
<div style="left:450px;top:550px;width:5px;height:24px;background:#705513"></div>
<div style="left:450px;top:574px;width:5px;height:83.8px;background:#1c6a21"></div>
<div style="left:450px;top:659.3px;width:5px;height:2.5px;background:#1c6a21"></div>
<div style="left:456px;top:532px;width:5px;height:18px;background:#7f1527"></div>
<div style="left:456px;top:550px;width:5px;height:24px;background:#705513"></div>
<div style="left:456px;top:574px;width:5px;height:83.8px;background:#1c6a21"></div>
<div style="left:456px;top:659.3px;width:5px;height:2.5px;background:#1c6a21"></div>
<div style="left:461px;top:531.6px;width:2px;height:1px;background:#c4c4c4"></div>
<span class="tx" style="left:470.24px;top:530.00px;font-size:5.5px;font-weight:bold;color:#cfcfcf">0</span>
<div style="left:461px;top:544.09px;width:2px;height:1px;background:#c4c4c4"></div>
<span class="tx" style="left:468.41px;top:542.49px;font-size:5.5px;font-weight:bold;color:#cfcfcf">-6</span>
<div style="left:461px;top:556.58px;width:2px;height:1px;background:#c4c4c4"></div>
<span class="tx" style="left:465.35px;top:554.98px;font-size:5.5px;font-weight:bold;color:#cfcfcf">-12</span>
<div style="left:461px;top:569.07px;width:2px;height:1px;background:#c4c4c4"></div>
<span class="tx" style="left:465.35px;top:567.47px;font-size:5.5px;font-weight:bold;color:#cfcfcf">-18</span>
<div style="left:461px;top:581.5600000000001px;width:2px;height:1px;background:#c4c4c4"></div>
<span class="tx" style="left:465.35px;top:579.96px;font-size:5.5px;font-weight:bold;color:#cfcfcf">-24</span>
<div style="left:461px;top:594.0500000000001px;width:2px;height:1px;background:#c4c4c4"></div>
<span class="tx" style="left:465.35px;top:592.45px;font-size:5.5px;font-weight:bold;color:#cfcfcf">-30</span>
<div style="left:461px;top:606.5400000000001px;width:2px;height:1px;background:#c4c4c4"></div>
<span class="tx" style="left:465.35px;top:604.94px;font-size:5.5px;font-weight:bold;color:#cfcfcf">-36</span>
<div style="left:461px;top:619.0300000000001px;width:2px;height:1px;background:#c4c4c4"></div>
<span class="tx" style="left:465.35px;top:617.43px;font-size:5.5px;font-weight:bold;color:#cfcfcf">-42</span>
<div style="left:461px;top:631.52px;width:2px;height:1px;background:#c4c4c4"></div>
<span class="tx" style="left:465.35px;top:629.92px;font-size:5.5px;font-weight:bold;color:#cfcfcf">-48</span>
<div style="left:461px;top:644.01px;width:2px;height:1px;background:#c4c4c4"></div>
<span class="tx" style="left:465.35px;top:642.41px;font-size:5.5px;font-weight:bold;color:#cfcfcf">-54</span>
<div style="left:461px;top:656.5px;width:2px;height:1px;background:#c4c4c4"></div>
<span class="tx" style="left:465.35px;top:654.90px;font-size:5.5px;font-weight:bold;color:#cfcfcf">-60</span>
<svg style="left:439px;top:668.5px;" width="15" height="13" viewBox="0 0 15 13"><path d="M0.2,3.8 H2.8 L6.5,0.5 V12.2 L2.8,8.9 H0.2 Z" fill="#f2f2f2"/><path d="M8.1,3.9 Q10.9,6.35 8.1,8.8" stroke="#f2f2f2" stroke-width="1.3" fill="none" stroke-linecap="round"/><path d="M11,1.8 Q16.2,6.35 11,10.9" stroke="#f2f2f2" stroke-width="1.4" fill="none" stroke-linecap="round"/></svg>
<svg style="left:461.3px;top:667.5px;" width="13" height="14" viewBox="0 0 13 14"><path d="M1.4,10 V6.5 A4.9,4.9 0 0 1 11.2,6.5 V7.6" stroke="#8b8d94" stroke-width="1.9" fill="none"/><rect x="0.2" y="8.6" width="2.8" height="5" rx="1" fill="#8b8d94"/><path d="M7,8.8 L11.2,13 M11.2,8.8 L7,13" stroke="#f4f4f4" stroke-width="1.9" stroke-linecap="square"/></svg>
<svg style="left:531.3px;top:697px;" width="13.5" height="12" viewBox="0 0 13.5 12"><rect x="0.8" y="0.8" width="11.9" height="10.4" rx="2.4" fill="none" stroke="#f0f0f0" stroke-width="1.5"/><path d="M0.8,6 H12.7" stroke="#f0f0f0" stroke-width="1.4"/></svg>
<svg style="left:560.8px;top:698.4px;" width="11.2" height="11.2" viewBox="0 0 11.2 11.2"><path d="M8.75,4.30 L8.90,4.77 L10.11,4.70 L10.11,6.50 L8.90,6.43 L8.74,6.91 L8.52,7.35 L9.42,8.16 L8.16,9.42 L7.35,8.52 L6.90,8.75 L6.43,8.90 L6.50,10.11 L4.70,10.11 L4.77,8.90 L4.29,8.74 L3.85,8.52 L3.04,9.42 L1.78,8.16 L2.68,7.35 L2.45,6.90 L2.30,6.43 L1.09,6.50 L1.09,4.70 L2.30,4.77 L2.46,4.29 L2.68,3.85 L1.78,3.04 L3.04,1.78 L3.85,2.68 L4.30,2.45 L4.77,2.30 L4.70,1.09 L6.50,1.09 L6.43,2.30 L6.91,2.46 L7.35,2.68 L8.16,1.78 L9.42,3.04 L8.52,3.85 Z M7.16,5.60 A1.564,1.564 0 1,0 4.04,5.60 A1.564,1.564 0 1,0 7.16,5.60 Z" fill="#f0f0f0" fill-rule="evenodd"/></svg>
<svg style="left:569.4px;top:696.9px;" width="6" height="6" viewBox="0 0 6 6"><circle cx="3" cy="3" r="2" fill="none" stroke="#f0f0f0" stroke-width="1.4"/></svg>
<svg style="left:640.8px;top:700px;" width="10" height="5.4" viewBox="0 0 10 5.4"><path d="M0,0 H9.8 L4.9,5.3 Z" fill="#f0f0f0"/></svg>
<svg style="left:773.6px;top:504px;" width="9" height="5" viewBox="0 0 9 5"><path d="M0,0 H8.6 L4.3,4.8 Z" fill="#f0f0f0"/></svg>
<svg style="left:772.5px;top:527.5px;" width="11" height="6.4" viewBox="0 0 11 6.4"><path d="M1,5.4 L5.5,1 L10,5.4" stroke="#e8e8e8" stroke-width="1.3" fill="none" stroke-linecap="round" stroke-linejoin="round"/></svg>
<svg style="left:772.5px;top:543px;" width="11" height="6.4" viewBox="0 0 11 6.4"><path d="M1,1 L5.5,5.4 L10,1" stroke="#e8e8e8" stroke-width="1.3" fill="none" stroke-linecap="round" stroke-linejoin="round"/></svg>
<svg style="left:722.55px;top:561.55px;" width="13.5" height="13.5" viewBox="0 0 13.5 13.5"><path d="M6.75,1 V12.5 M1,6.75 H12.5" stroke="#f0f0f0" stroke-width="1.9" fill="none"/></svg>
<svg style="left:748.5px;top:562px;" width="13" height="13.5" viewBox="0 0 13 13.5"><path d="M0.3,1.6 Q0.3,0.6 1.6,0.6 H11.4 Q12.7,0.6 12.7,1.6 V2.2 H0.3 Z" fill="#9a9a9e"/><path d="M1.6,2.6 V11.2 Q1.6,12.6 3.2,12.6 H9.8 Q11.4,12.6 11.4,11.2 V2.6" stroke="#9a9a9e" stroke-width="1.5" fill="none"/><rect x="4.3" y="4.3" width="1.1" height="6.2" fill="#6f6f74"/><rect x="6" y="4.3" width="1.1" height="6.2" fill="#6f6f74"/><rect x="7.7" y="4.3" width="1.1" height="6.2" fill="#6f6f74"/></svg>
<div style="left:776.9px;top:562.1px;width:2.9px;height:2.9px;background:#a0a0a4;border-radius:50%"></div>
<div style="left:776.9px;top:566.8000000000001px;width:2.9px;height:2.9px;background:#a0a0a4;border-radius:50%"></div>
<div style="left:776.9px;top:571.5px;width:2.9px;height:2.9px;background:#a0a0a4;border-radius:50%"></div>
<svg style="left:952.5px;top:564.3000000000001px;" width="14.6" height="14.6" viewBox="0 0 14.6 14.6"><path d="M11.61,5.52 L11.82,6.17 L13.48,6.07 L13.48,8.53 L11.82,8.43 L11.61,9.09 L11.30,9.70 L12.54,10.80 L10.80,12.54 L9.70,11.30 L9.08,11.61 L8.43,11.82 L8.53,13.48 L6.07,13.48 L6.17,11.82 L5.51,11.61 L4.90,11.30 L3.80,12.54 L2.06,10.80 L3.30,9.70 L2.99,9.08 L2.78,8.43 L1.12,8.53 L1.12,6.07 L2.78,6.17 L2.99,5.51 L3.30,4.90 L2.06,3.80 L3.80,2.06 L4.90,3.30 L5.52,2.99 L6.17,2.78 L6.07,1.12 L8.53,1.12 L8.43,2.78 L9.09,2.99 L9.70,3.30 L10.80,2.06 L12.54,3.80 L11.30,4.90 Z M9.44,7.30 A2.142,2.142 0 1,0 5.16,7.30 A2.142,2.142 0 1,0 9.44,7.30 Z" fill="#f4f4f4" fill-rule="evenodd"/></svg>
<svg style="left:645.5px;top:726.5px;" width="14" height="12" viewBox="0 0 14 12"><rect x="0.5" y="8.2" width="2.2" height="3.3" fill="#53565f"/><rect x="4" y="5.8" width="2.2" height="5.7" fill="#53565f"/><rect x="7.5" y="3.2" width="2.2" height="8.3" fill="#53565f"/><rect x="11" y="0.5" width="2.2" height="11" fill="#53565f"/></svg>
<svg style="left:671.5px;top:725.5px;" width="14" height="14" viewBox="0 0 14 14"><circle cx="7" cy="7" r="1.9" fill="#6e7079"/><path d="M4.4,4.2 A3.9,3.9 0 0 0 4.4,9.8 M9.6,4.2 A3.9,3.9 0 0 1 9.6,9.8" stroke="#5d6069" stroke-width="1.1" fill="none"/><path d="M2.3,2.4 A6.4,6.4 0 0 0 2.3,11.6 M11.7,2.4 A6.4,6.4 0 0 1 11.7,11.6" stroke="#4a4d56" stroke-width="1.1" fill="none"/></svg>
</body></html>
